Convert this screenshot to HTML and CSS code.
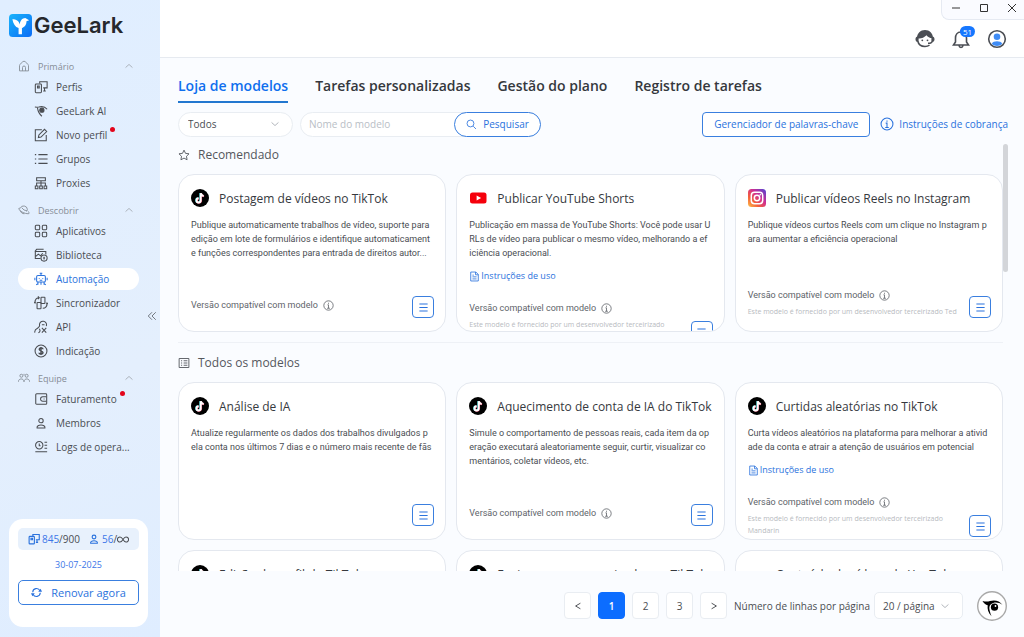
FILE: index.html
```html
<!DOCTYPE html>
<html lang="pt-BR">
<head>
<meta charset="utf-8">
<title>GeeLark</title>
<link rel="stylesheet" href="styles.css">
</head>
<body>
<svg class="defs" aria-hidden="true">
  <defs>
    <linearGradient id="logo-grad" x1="0" y1="0" x2="1" y2="1"><stop offset="0" stop-color="#19b4fb"/><stop offset="1" stop-color="#0b6cf5"/></linearGradient>
    <linearGradient id="ig-grad" x1="0" y1="1" x2="1" y2="0"><stop offset="0" stop-color="#fdc04d"/><stop offset=".3" stop-color="#f56038"/><stop offset=".6" stop-color="#cf2e92"/><stop offset="1" stop-color="#4c45d6"/></linearGradient>
    <symbol id="i-home" viewBox="0 0 16 16"><path d="M2 7.500C2 6 6 2 8 1.500c2 .5 6 4.500 6 6v7H2zM6 14.500V10a2 2 0 0 1 4 0v4.500"/></symbol>
    <symbol id="i-profiles" viewBox="0 0 16 16"><path d="M6.500 4V2H15v7h-4.500M12 9v3M10.500 12.500h3"/><rect x="1.500" y="4.500" width="7" height="10" rx="1"/><path d="M4 7h2v2H4z"/></symbol>
    <symbol id="i-bird" viewBox="0 0 16 16"><path d="M1 3.500c2 .2 3 .2 4.500 0C9 2.500 12.500 3 15 6M4 4.500c.5 4 2 7 5 9.500"/><circle cx="9" cy="7" r="2.400" fill="currentColor"/></symbol>
    <symbol id="i-edit" viewBox="0 0 16 16"><path d="M9 2H1.500v12.500H14V8"/><path d="m5 11 .6-3L12 1.500 14.500 4 8 10.400z"/></symbol>
    <symbol id="i-list" viewBox="0 0 16 16"><path d="M5 3h10.500M5 8h10.500M5 13h10.500M1 3h1.500M1 8h1.500M1 13h1.500"/></symbol>
    <symbol id="i-proxy" viewBox="0 0 16 16"><path d="M3 2h10v3.500H3zM8 5.500V11M3 11V8h10v3M1.500 11.500h3v3h-3zM6.500 11.500h3v3h-3zM11.500 11.500h3v3h-3z"/></symbol>
    <symbol id="i-planet" viewBox="0 0 16 16"><path d="M3 5.500a5 5 0 0 1 9.500 1.500c0 1-.4 2-1 3M3 6c-2-1-2.500 0-1.500 1.500 2 3 8 5.500 12 5.500 2 0 2-1.500 0-3M3 8.500c.5 3 3 4.500 5.500 4.500M5 5l3 3 4 1"/></symbol>
    <symbol id="i-grid" viewBox="0 0 16 16"><rect x="1.500" y="1.500" width="5" height="5" rx="1"/><rect x="9.500" y="1.500" width="5" height="5" rx="1"/><rect x="1.500" y="9.500" width="5" height="5" rx="1"/><rect x="9.500" y="9.500" width="5" height="5" rx="1"/></symbol>
    <symbol id="i-library" viewBox="0 0 16 16"><path d="M7.500 12H1.500V4h12v3.500M1 4l2-2.500h8M2 9.500 5 7l2.500 2L10 6"/><circle cx="11.500" cy="11.500" r="3.500"/><path d="M11.500 10v3M10.500 11.500h2"/></symbol>
    <symbol id="i-robot" viewBox="0 0 16 16"><rect x="3" y="4" width="10" height="7.500" rx="1.500"/><path d="M8 1v3M6.500 1.500h3M1 6.500v3M15 6.500v3M6 7v1M10 7v1M6.500 9.500h3M4.500 11.500v3M11.500 11.500v3M2.500 14.500l2-1M13.500 14.500l-2-1M8 11.500v3"/></symbol>
    <symbol id="i-sync" viewBox="0 0 16 16"><rect x="8" y="1.500" width="4.500" height="7" rx=".6"/><rect x="3.500" y="7.500" width="4.500" height="7" rx=".6"/><path d="M6 2C2.500 2 1 4.500 1 8l-1-1M1 8l1-1.500M10 14c3.500 0 5-2.500 5-6l1 1M15 8l-1 1.500M4.500 3.500 6 2 4.500.5"/></symbol>
    <symbol id="i-api" viewBox="0 0 16 16"><path d="M1 14.500c-.5-2 1-4 3-5L6.500 7M5 14.500c2-.5 2.500-3 1-4.500M6.500 7C5.500 3.500 8 1 11 1.500c2.500.5 4 3 3 5.500M9 5.500h3M9 9l5 5.500M14 9l-5 5.500"/></symbol>
    <symbol id="i-dollar" viewBox="0 0 16 16"><circle cx="8" cy="8" r="6.800"/><path stroke-width="1.700" d="M10.300 6c-.2-2.200-4.300-2-4.300 0s4.300 1.700 4.300 4c0 2-4.500 2.200-4.600 0M8 3.500v9"/></symbol>
    <symbol id="i-team" viewBox="0 0 16 16"><circle cx="4.500" cy="5" r="2"/><circle cx="11.500" cy="5" r="2"/><path d="M0.500 13c0-5 7.500-5 7.500 0 0-5 7.500-5 7.500 0M8 2.500v2"/></symbol>
    <symbol id="i-wallet" viewBox="0 0 16 16"><rect x="2" y="2" width="12.500" height="12" rx="1"/><path d="M14 5.500h-4a2.500 2.500 0 0 0 0 5h4M11 8h1"/></symbol>
    <symbol id="i-member" viewBox="0 0 16 16"><circle cx="8" cy="5.300" r="2.500"/><path d="M3.500 13.700c-1-4.500 10-4.500 9 0z"/></symbol>
    <symbol id="i-log" viewBox="0 0 16 16"><circle cx="6" cy="6" r="4.200"/><path d="M6 4v2.500h1.500M12 2.500h3M12 6h3M12 9.500h3M1.500 13.500H15"/></symbol>
    <symbol id="i-up" viewBox="0 0 16 16"><path d="m2.500 10.500 5.500-5 5.500 5"/></symbol>
    <symbol id="i-down" viewBox="0 0 16 16"><path d="M2.500 5.500l5.500 5 5.500-5"/></symbol>
    <symbol id="i-info" viewBox="0 0 16 16"><circle cx="8" cy="8" r="6.800"/><path d="M8 4v1.500M6.500 7H8v5M6 12h4"/></symbol>
    <symbol id="i-doc" viewBox="0 0 16 16"><path d="M2.500 1.500H10l3.500 3.500v9.500h-11zM9.500 1.500V5.500h4M5 6h2M5 8.500h6M5 11.500h6"/></symbol>
    <symbol id="i-menu" viewBox="0 0 16 16"><path d="M2 3h12M2 8h12M2 13h12"/></symbol>
    <symbol id="i-tiktok" viewBox="0 0 18 18"><circle cx="9" cy="9" r="9" fill="#000"/><g fill="none" stroke-width="1.900"><path stroke="#35d6d8" d="M9.300 4v7.200a2.100 2.100 0 1 1-2.100-2.100"/><path stroke="#e8466a" d="M10.100 4.500v7.200a2.100 2.100 0 1 1-2.100-2.100M10.200 4.500c.2 1.600 1.300 2.600 2.900 2.700"/><path stroke="#fff" d="M9.700 4.200v7.200a2.100 2.100 0 1 1-2.100-2.100M9.800 4.200c.2 1.600 1.300 2.600 2.900 2.700"/></g></symbol>
    <symbol id="i-youtube" viewBox="0 0 18 18"><rect x="1" y="3.500" width="16.500" height="11" rx="2.500" fill="#f5000b"/><path fill="#fff" stroke="none" d="m7.600 6.600 4.500 2.500-4.500 2.500z"/></symbol>
    <symbol id="i-play" viewBox="0 0 18 18"><path fill="#f5000b" d="M3 6h12v8H3z"/></symbol>
    <symbol id="i-instagram" viewBox="0 0 18 18"><rect width="18" height="18" rx="3.500" fill="url(#ig-grad)"/><g fill="none" stroke="#fff" stroke-width="1.500"><rect x="3.300" y="3.300" width="11.400" height="11.400" rx="3.200"/><circle cx="9" cy="9" r="2.700"/></g><circle cx="12.300" cy="5.700" r=".8" fill="#fff"/></symbol>
  </defs>
</svg>

<div class="app">
  <aside class="sidebar">
    <div class="brand">
      <svg class="brand-mark" viewBox="0 0 24 24"><rect width="24" height="24" rx="4" fill="url(#logo-grad)"/><path fill="#fff" d="M3.500 5.500c4 0 7 1.500 7.500 5.500 1-4 2.500-6.500 6-6.700l4 2.200-2.800 1c.2 4-2.200 6-4.700 7.200V21H10v-6.300C6.500 13.500 4.500 10.500 3.500 5.500z"/></svg>
      <span class="brand-name">GeeLark</span>
    </div>

    <nav class="nav">
      <section class="group">
        <button class="group-head"><svg class="icon"><use href="#i-home"/></svg><span>Primário</span><svg class="caret"><use href="#i-up"/></svg></button>
        <a class="item" href="#"><svg class="icon"><use href="#i-profiles"/></svg><span>Perfis</span></a>
        <a class="item" href="#"><svg class="icon"><use href="#i-bird"/></svg><span>GeeLark AI</span></a>
        <a class="item" href="#"><svg class="icon"><use href="#i-edit"/></svg><span class="dotted">Novo perfil</span></a>
        <a class="item" href="#"><svg class="icon"><use href="#i-list"/></svg><span>Grupos</span></a>
        <a class="item" href="#"><svg class="icon"><use href="#i-proxy"/></svg><span>Proxies</span></a>
      </section>
      <section class="group">
        <button class="group-head"><svg class="icon"><use href="#i-planet"/></svg><span>Descobrir</span><svg class="caret"><use href="#i-up"/></svg></button>
        <a class="item" href="#"><svg class="icon"><use href="#i-grid"/></svg><span>Aplicativos</span></a>
        <a class="item" href="#"><svg class="icon"><use href="#i-library"/></svg><span>Biblioteca</span></a>
        <a class="item active" href="#"><svg class="icon"><use href="#i-robot"/></svg><span>Automação</span></a>
        <a class="item" href="#"><svg class="icon"><use href="#i-sync"/></svg><span>Sincronizador</span></a>
        <a class="item" href="#"><svg class="icon"><use href="#i-api"/></svg><span>API</span></a>
        <a class="item" href="#"><svg class="icon"><use href="#i-dollar"/></svg><span>Indicação</span></a>
      </section>
      <section class="group">
        <button class="group-head"><svg class="icon"><use href="#i-team"/></svg><span>Equipe</span><svg class="caret"><use href="#i-up"/></svg></button>
        <a class="item" href="#"><svg class="icon"><use href="#i-wallet"/></svg><span class="dotted">Faturamento</span></a>
        <a class="item" href="#"><svg class="icon"><use href="#i-member"/></svg><span>Membros</span></a>
        <a class="item" href="#"><svg class="icon"><use href="#i-log"/></svg><span>Logs de opera...</span></a>
      </section>
    </nav>
    <button class="collapse" aria-label="Recolher menu"><svg viewBox="0 0 16 16"><path d="M8 2 2 8l6 6M14 2 8 8l6 6"/></svg></button>

    <div class="plan">
      <div class="usage">
        <span class="stat"><svg class="icon"><use href="#i-profiles"/></svg><span><b>845</b>/900</span></span>
        <span class="stat"><svg class="icon"><use href="#i-member"/></svg><span><b>56</b>/</span><svg class="infinity" viewBox="0 0 14 8"><path d="M7 4C5.500 1.500 4.500 1 3.500 1a3 3 0 0 0 0 6C4.500 7 5.500 6.500 7 4s2.500-3 3.500-3a3 3 0 0 1 0 6C9.500 7 8.500 6.500 7 4z"/></svg></span>
      </div>
      <div class="plan-date">30-07-2025</div>
      <button class="renew"><svg viewBox="0 0 16 16"><path d="M2.500 7.500A5.500 5.500 0 0 1 13 5.500M13.500 8.500A5.500 5.500 0 0 1 3 10.500"/><path class="solid" d="M10.500 7H16l-2-4.500zM5.500 9H0l2 4.500z"/></svg>Renovar agora</button>
    </div>
  </aside>

  <main class="main">
    <header class="topbar">
      <div class="window-controls">
        <button aria-label="Minimizar"><svg viewBox="0 0 10 10"><path d="M1 5h8"/></svg></button>
        <button aria-label="Maximizar"><svg viewBox="0 0 10 10"><path d="M1.500 1.500h7v7h-7z"/></svg></button>
        <button aria-label="Fechar"><svg viewBox="0 0 10 10"><path d="m1 1 8 8M9 1 1 9"/></svg></button>
      </div>
      <div class="top-actions">
        <button aria-label="Suporte"><svg viewBox="0 0 20 20"><path class="fill" d="M2 9C2 4.500 5.500 1 10 1s8 3.500 8 8c-2.500.5-5-.8-6.500-2.800C9.500 8.300 6 9.800 3.500 9.500z"/><path d="M2.800 8.500v3.500c.7 3.500 3.500 5.500 7.200 5.500 1.800 0 3.300-.5 4.500-1.300M17.200 8.500V12c0 1.600-1.700 2.300-4.200 2.300"/><path class="fill" d="M2.800 7.500v5.500C-.3 13-.3 7.500 2.800 7.500zM17.200 7.500v5.500c3.100 0 3.100-5.500 0-5.500z"/><circle class="fill" cx="7.300" cy="11.300" r=".9"/><circle class="fill" cx="12.500" cy="11.300" r=".9"/></svg></button>
        <button aria-label="Notificações"><svg viewBox="0 0 20 20"><path d="M10 3c-4 0-5.500 3-5.500 6v4L2.500 16h15l-2-3V9c0-3-1.500-6-5.500-6zM10 1v2M8 16.500c.3 2.500 3.700 2.500 4 0"/></svg><span class="badge">51</span></button>
        <button aria-label="Conta"><svg viewBox="0 0 20 20"><circle cx="10" cy="10" r="8.300"/><circle class="blue" cx="10" cy="7.800" r="3.300"/><path class="blue" d="M4.800 14.700c1.500-3.200 8.900-3.200 10.400 0-2.500 3-7.900 3-10.400 0z"/></svg></button>
      </div>
    </header>

    <div class="content">
      <nav class="tabs">
        <a class="tab current" href="#">Loja de modelos</a>
        <a class="tab" href="#">Tarefas personalizadas</a>
        <a class="tab" href="#">Gestão do plano</a>
        <a class="tab" href="#">Registro de tarefas</a>
      </nav>

      <div class="filters">
        <span class="picker category"><select aria-label="Categoria"><option>Todos</option></select><svg class="caret"><use href="#i-down"/></svg></span>
        <form class="search">
          <input type="text" placeholder="Nome do modelo" aria-label="Nome do modelo">
          <button type="button"><svg viewBox="0 0 16 16"><circle cx="6.500" cy="6.500" r="5"/><path d="m10.500 10.500 4 4"/></svg>Pesquisar</button>
        </form>
        <button class="keywords">Gerenciador de palavras-chave</button>
        <a class="billing" href="#"><svg class="icon"><use href="#i-info"/></svg>Instruções de cobrança</a>
      </div>

      <div class="scroller">
        <section>
          <h2><svg class="icon" viewBox="0 0 16 16"><path d="m8 1.500 2 4.300 4.700.6-3.400 3.300.8 4.700L8 12.100l-4.100 2.300.8-4.700L1.300 6.400 6 5.800z"/></svg>Recomendado</h2>
          <div class="cards">
            <article class="card">
              <h3><svg><use href="#i-tiktok"/></svg>Postagem de vídeos no TikTok</h3>
              <p>Publique automaticamente trabalhos de vídeo, suporte para<br>edição em lote de formulários e identifique automaticament<br>e funções correspondentes para entrada de direitos autor...</p>
              <footer><div><span class="version">Versão compatível com modelo<svg><use href="#i-info"/></svg></span></div><button aria-label="Detalhes"><svg><use href="#i-menu"/></svg></button></footer>
            </article>
            <article class="card">
              <h3><svg><use href="#i-youtube"/></svg>Publicar YouTube Shorts</h3>
              <p>Publicação em massa de YouTube Shorts: Você pode usar U<br>RLs de vídeo para publicar o mesmo vídeo, melhorando a ef<br>iciência operacional.</p>
              <a href="#"><svg><use href="#i-doc"/></svg>Instruções de uso</a>
              <footer><div><span class="version">Versão compatível com modelo<svg><use href="#i-info"/></svg></span><small>Este modelo é fornecido por um desenvolvedor terceirizado<br>Ted</small></div><button aria-label="Detalhes"><svg><use href="#i-menu"/></svg></button></footer>
            </article>
            <article class="card">
              <h3><svg><use href="#i-instagram"/></svg>Publicar vídeos Reels no Instagram</h3>
              <p>Publique vídeos curtos Reels com um clique no Instagram p<br>ara aumentar a eficiência operacional</p>
              <footer><div><span class="version">Versão compatível com modelo<svg><use href="#i-info"/></svg></span><small>Este modelo é fornecido por um desenvolvedor terceirizado Ted</small></div><button aria-label="Detalhes"><svg><use href="#i-menu"/></svg></button></footer>
            </article>
          </div>
        </section>
        <hr>
        <section>
          <h2><svg class="icon" viewBox="0 0 16 16"><path d="M1.500 2h13v12h-13zM4 5h1.500M7.500 5h5M4 8h1.500M7.500 8h5M4 11h1.500M7.500 11h5"/></svg>Todos os modelos</h2>
          <div class="cards">
            <article class="card">
              <h3><svg><use href="#i-tiktok"/></svg>Análise de IA</h3>
              <p>Atualize regularmente os dados dos trabalhos divulgados p<br>ela conta nos últimos 7 dias e o número mais recente de fãs</p>
              <footer><div></div><button aria-label="Detalhes"><svg><use href="#i-menu"/></svg></button></footer>
            </article>
            <article class="card">
              <h3><svg><use href="#i-tiktok"/></svg>Aquecimento de conta de IA do TikTok</h3>
              <p>Simule o comportamento de pessoas reais, cada item da op<br>eração executará aleatoriamente seguir, curtir, visualizar co<br>mentários, coletar vídeos, etc.</p>
              <footer><div><span class="version">Versão compatível com modelo<svg><use href="#i-info"/></svg></span></div><button aria-label="Detalhes"><svg><use href="#i-menu"/></svg></button></footer>
            </article>
            <article class="card">
              <h3><svg><use href="#i-tiktok"/></svg>Curtidas aleatórias no TikTok</h3>
              <p>Curta vídeos aleatórios na plataforma para melhorar a ativid<br>ade da conta e atrair a atenção de usuários em potencial</p>
              <a href="#"><svg><use href="#i-doc"/></svg>Instruções de uso</a>
              <footer><div><span class="version">Versão compatível com modelo<svg><use href="#i-info"/></svg></span><small>Este modelo é fornecido por um desenvolvedor terceirizado<br>Mandarin</small></div><button aria-label="Detalhes"><svg><use href="#i-menu"/></svg></button></footer>
            </article>
            <article class="card"><h3><svg><use href="#i-tiktok"/></svg>Edição de perfil do TikTok</h3></article>
            <article class="card"><h3><svg><use href="#i-tiktok"/></svg>Enviar mensagens privadas no TikTok</h3></article>
            <article class="card"><h3><svg><use href="#i-play"/></svg>Conteúdo de vídeos do YouTube</h3></article>
          </div>
        </section>
        <span class="thumb"></span>
      </div>

      <footer class="pager">
        <button aria-label="Anterior"><svg viewBox="0 0 10 10"><path d="M8 1.500 2 5l6 3.500"/></svg></button>
        <button class="on">1</button>
        <button>2</button>
        <button>3</button>
        <button aria-label="Próxima"><svg viewBox="0 0 10 10"><path d="m2 1.500 6 3.500-6 3.500"/></svg></button>
        <label for="rows">Número de linhas por página</label>
        <span class="picker rows"><select id="rows"><option>20 / página</option></select><svg class="caret"><use href="#i-down"/></svg></span>
        <button class="assistant" aria-label="GeeLark AI"><svg viewBox="0 0 30 30"><circle cx="15" cy="15" r="14.300" fill="#fff" stroke="#a9a9a9" stroke-width="1.400"/><path d="M5.500 10c3.500.7 5 .7 7.500 0 5-1.400 9.500-.2 12.500 4-3.800-3-8.500-3.200-11.500-.8-2.500 2.200-2 5.300.5 12-3.500-3.500-4.300-7.500-3.800-11-2-.5-4-2-5.200-4.200z"/><circle cx="17.500" cy="16.200" r="3.600"/><circle cx="18.500" cy="15" r=".9" fill="#fff"/></svg></button>
      </footer>
    </div>
  </main>
</div>
</body>
</html>
```
FILE: styles.css
```css
* { box-sizing: border-box; }
body {
  margin: 0;
  font-family: "Open Sans", "Noto Sans", sans-serif;
  font-size: 10px;
  color: #4a4d52;
}
.defs { position: absolute; width: 0; height: 0; }
svg { fill: none; stroke: currentColor; stroke-width: 1.2; flex: none; }
button, input, select { font: inherit; color: inherit; margin: 0; padding: 0; background: none; border: 0; outline: 0; }
button { cursor: pointer; }
a { color: inherit; text-decoration: none; }
h2, h3, p { margin: 0; }
.icon { width: 14px; height: 14px; }
.caret { width: 10px; height: 10px; color: #9a9fa6; }

.app { display: flex; height: 100vh; background: #fafcff; }

/* sidebar */
.sidebar {
  position: relative;
  display: flex;
  flex-direction: column;
  flex: none;
  width: 160px;
  padding: 13px 12px 10px 9px;
  background: linear-gradient(160deg, #e0eeff, #e4effd 60%, #dfedff);
}
.brand { display: flex; align-items: center; gap: 2px; height: 24px; color: #26282c; }
.brand-mark { width: 23px; height: 23px; stroke: none; }
.brand-name { font-family: Inter, sans-serif; font-size: 22px; font-weight: 600; line-height: 24px; }
.nav { margin-top: 20px; padding-right: 9px; }
.group { display: flex; flex-direction: column; padding: 0 0 6px 9px; }
.group-head { display: flex; align-items: center; gap: 8px; height: 18px; padding-right: 5px; color: #868d96; font-size: 9px; text-align: left; }
.group-head .icon { width: 12px; height: 12px; }
.group-head span { flex: 1; }
.item { display: flex; align-items: center; gap: 8px; height: 24px; padding-left: 16px; border-radius: 12px; font-size: 11px; white-space: nowrap; }
.item.active { background: #fff; color: #2a72dd; height: 22px; margin: 1px 0; }
.dotted { position: relative; }
.dotted::after { content: ""; position: absolute; right: -8px; top: -1px; width: 5px; height: 5px; border-radius: 50%; background: #e3051b; }
.collapse { position: absolute; right: 3px; top: 311px; width: 10px; height: 10px; color: #6a7078; }
.collapse svg { display: block; width: 10px; height: 10px; stroke-width: 1.5; }
.item { font-size: 10px; }
.plan {
  display: flex;
  flex-direction: column;
  gap: 8px;
  margin-top: auto;
  padding: 9px 9px 22px;
  background: #fff;
  border-radius: 14px;
}
.usage { display: flex; align-items: center; justify-content: center; gap: 8px; height: 22px; border-radius: 5px; background: #e8f1fc; }
.stat { display: flex; align-items: center; }
.stat .icon { width: 12px; height: 12px; margin-right: 2px; color: #2a72dd; stroke-width: 1.5; }
.stat b { font-weight: 400; color: #3c76e8; }
.infinity { width: 12px; height: 7px; }
.plan-date { line-height: 14px; text-align: center; color: #3c76e8; font-size: 9px; }
.renew { display: flex; align-items: center; justify-content: center; gap: 9px; height: 25px; border: 1px solid #3a7fdf; border-radius: 5px; color: #2a72dd; font-size: 11px; font-weight: 500; }
.renew svg { width: 11px; height: 11px; stroke-width: 1.6; }
.renew .solid { fill: currentColor; stroke: none; }

/* header */
.main { display: flex; flex-direction: column; flex: 1; min-width: 0; }
.topbar { display: flex; flex-direction: column; align-items: flex-end; flex: none; height: 58px; background: #fff; border-bottom: 1px solid #e6eaf0; }
.window-controls { display: flex; gap: 18px; padding: 3px 7px 6px 9px; border: 1px solid #e6eaf2; border-width: 0 0 1px 1px; border-radius: 0 0 0 8px; background: #fafbff; color: #333; }
.window-controls button { width: 10px; height: 10px; }
.window-controls svg { display: block; width: 10px; height: 10px; stroke-width: 1; }
.top-actions { display: flex; gap: 16px; padding: 9px 17px 0 0; color: #4b4e54; }
.top-actions button { position: relative; width: 20px; height: 20px; }
.top-actions svg { display: block; width: 20px; height: 20px; stroke-width: 1.6; }
.top-actions .fill { fill: currentColor; stroke: none; }
.top-actions .blue { fill: #3f8cf5; stroke: none; }
.badge { position: absolute; left: 9px; top: -3px; padding: 0 3px; border-radius: 6px; background: #1677ff; color: #fff; font-size: 8px; line-height: 11px; }

/* content */
.content { display: flex; flex-direction: column; flex: 1; min-height: 0; padding: 17px 16px 0 18px; }
.tabs { display: flex; gap: 27px; font-size: 14px; font-weight: 600; line-height: 22px; color: #35383d; }
.tab { padding-bottom: 4px; border-bottom: 2px solid transparent; white-space: nowrap; }
.tab.current { color: #0f6fee; border-color: #2277cf; }
.filters { display: flex; align-items: center; height: 26px; margin: 8px 0 7px; }
.picker { position: relative; display: flex; align-items: center; background: #fff; border: 1px solid #e9edf2; }
.picker select { appearance: none; width: 100%; height: 100%; }
.picker .caret { position: absolute; right: 12px; pointer-events: none; }
.category { width: 115px; height: 25px; padding-left: 9px; border-radius: 13px; }
.search { display: flex; width: 241px; height: 25px; margin-left: 7px; background: #fff; border: 1px solid #e9edf2; border-radius: 13px; }
.search input { flex: 1; min-width: 0; padding-left: 8px; }
.search input::placeholder { color: #b9bec6; opacity: 1; }
.search button { display: flex; align-items: center; justify-content: center; gap: 6px; width: 87px; margin: -1px; background: #fff; border: 1px solid #3a7fdf; border-radius: 13px; color: #2a72dd; }
.search svg { width: 11px; height: 11px; }
.keywords { height: 25px; margin-left: auto; padding: 0 11px; background: #fff; border: 1px solid #3a7fdf; border-radius: 4px; color: #2a72dd; }
.billing { display: flex; align-items: center; gap: 5px; margin-left: 10px; color: #2a72dd; }
.scroller { position: relative; flex: 1; min-height: 0; overflow: hidden; padding-right: 5px; }
.thumb { position: absolute; right: 0; top: 0; width: 5px; height: 30%; border-radius: 3px; background: #d3d5d9; }
h2 { display: flex; align-items: center; gap: 8px; margin-bottom: 8px; font-size: 12px; font-weight: 500; line-height: 22px; color: #54575d; }
h2 .icon { width: 12px; height: 12px; }
hr { margin: 10px 0 9px; border: 0; border-top: 1px solid #eef1f6; }
.cards { display: grid; grid-template-columns: repeat(3, minmax(0, 1fr)); grid-auto-rows: 158px; gap: 10px; }
.card { display: flex; flex-direction: column; padding: 13px 11px 13px 12px; overflow: hidden; background: #fff; border: 1px solid #e4e8ef; border-radius: 16px; }
.card > * { flex: none; }
.card h3 { display: flex; align-items: center; gap: 10px; height: 20px; font-size: 12px; font-weight: 500; color: #36393e; white-space: nowrap; }
.card h3 svg { width: 18px; height: 18px; stroke: none; }
.card p { margin-top: 10px; font-family: Roboto, sans-serif; font-size: 9px; line-height: 14px; white-space: nowrap; }
.card > a { display: flex; align-items: center; gap: 1px; margin: 9px 0 18px; font-size: 9px; font-weight: 500; line-height: 14px; color: #2a72dd; }
.card > a svg { width: 11px; height: 11px; }
.card footer { display: flex; justify-content: space-between; align-items: flex-end; margin-top: auto; }
.version { display: flex; align-items: center; gap: 5px; padding-bottom: 4px; font-family: Roboto, sans-serif; font-size: 9px; line-height: 14px; color: #60646a; }
.version svg { width: 11px; height: 11px; }
.version:only-child { padding-bottom: 6px; }
.card small { display: block; font-size: 7px; line-height: 12px; color: #b7bac0; white-space: nowrap; }
.card footer button { display: flex; align-items: center; justify-content: center; width: 22px; height: 22px; background: #fff; border: 1px solid #3a7fdf; border-radius: 4px; color: #2a72dd; }
.card footer button svg { width: 11px; height: 11px; stroke-width: 1.5; }

.pager { display: flex; align-items: center; justify-content: flex-end; flex: none; height: 66px; gap: 7px; padding: 3px 1px 0 0; }
.pager button { display: flex; align-items: center; justify-content: center; width: 27px; height: 27px; background: #fff; border: 1px solid #e9edf2; border-radius: 4px; }
.pager button svg { width: 8px; height: 8px; }
.pager .on { background: #0c6dff; border-color: #0c6dff; color: #fff; font-weight: 600; }
.pager label { margin-right: -3px; }
.rows { width: 89px; height: 27px; padding-left: 8px; border-radius: 5px; }
.pager .assistant { width: 30px; height: 30px; margin-left: 7px; border: 0; border-radius: 50%; }
.pager .assistant svg { width: 30px; height: 30px; fill: #000; stroke: none; }
```
